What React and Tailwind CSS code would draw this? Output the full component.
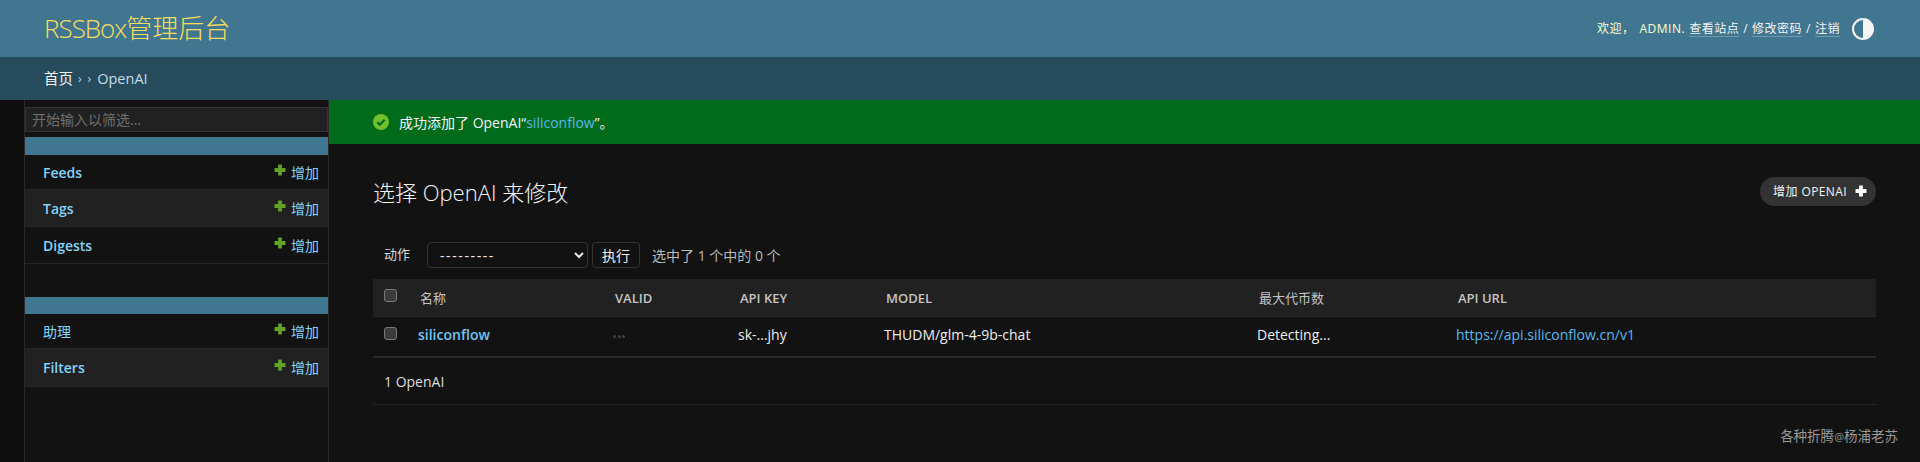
const FONT = "font-['Open_Sans','Noto_Sans_CJK_SC',sans-serif]";

function PlusIcon({ className = "text-[#5fa225]", size = 12 }) {
  return (
    <svg width={size} height={size} viewBox="0 0 12 12" className={className}>
      <path fill="currentColor" d="M4.6 0.5h2.8a.5.5 0 0 1 .5.5v3.1H11a.5.5 0 0 1 .5.5v2.8a.5.5 0 0 1-.5.5H7.900v3.100a.5.5 0 0 1-.5.5H4.600a.5.5 0 0 1-.5-.5V7.900H1a.5.5 0 0 1-.5-.5V4.600a.5.5 0 0 1 .5-.5h3.100V1a.5.5 0 0 1 .5-.5z" />
    </svg>
  );
}

function SideRow({ label, bold = true, alt, className }) {
  return (
    <div
      className={`flex items-center justify-between pl-[18px] pr-[9px] border-b border-[#262626] ${
        alt ? "bg-[#212121]" : ""
      } ${className}`}
    >
      <span className={`text-[14px] text-[#81d4fa] ${bold ? "font-semibold" : ""}`}>{label}</span>
      <span className="flex items-center gap-[5px] text-[14px] text-[#81d4fa]">
        <PlusIcon className="text-[#5fa225] -mt-[5px]" />
        增加
      </span>
    </div>
  );
}

function Checkbox() {
  return (
    <span className="block w-[13px] h-[13px] rounded-[3px] border border-[#7a7a7a] bg-[#3b3b3b]" />
  );
}

export default function App() {
  const cols = ["w-[45px]", "w-[195px]", "w-[125px]", "w-[146px]", "w-[373px]", "w-[199px]", ""];
  const heads = [
    { label: "名称", cjk: true },
    { label: "VALID" },
    { label: "API KEY" },
    { label: "MODEL" },
    { label: "最大代币数", cjk: true },
    { label: "API URL" },
  ];

  return (
    <div className={`h-[462px] overflow-hidden bg-[#121212] text-[#eeeeee] ${FONT}`}>
      <header className="h-[57px] bg-[#417690] flex items-center justify-between pl-[44px] pr-[46px]">
        <h1 className="text-[26px] font-light text-[#f5dd5d]">
          <span className="tracking-[-1px]">RSSBox</span>管理后台
        </h1>
        <div className="flex items-center gap-[12px] text-[12px] tracking-[0.5px] text-[#ffffcc]">
          <div className="flex items-center">
            <span className="mr-[1px]">欢迎，</span>
            <span className="mr-[4px] ml-[4px]">ADMIN.</span>
            <a className="text-[#f5f5f5] border-b border-white/25 leading-[15px]">查看站点</a>
            <span className="text-[#f5f5f5] mx-[4px]">/</span>
            <a className="text-[#f5f5f5] border-b border-white/25 leading-[15px]">修改密码</a>
            <span className="text-[#f5f5f5] mx-[4px]">/</span>
            <a className="text-[#f5f5f5] border-b border-white/25 leading-[15px]">注销</a>
          </div>
          <svg width="22" height="22" viewBox="0 0 22 22">
            <circle cx="11" cy="11" r="10" fill="none" stroke="#f5f5f5" strokeWidth="2" />
            <path d="M11 1a10 10 0 0 1 0 20z" fill="#f5f5f5" />
          </svg>
        </div>
      </header>

      <div className="h-[43px] bg-[#264b5d] flex items-center pl-[44px] text-[14.500px] text-[#c4dce8]">
        <span className="text-[#f5f5f5]">首页</span>
        <span className="ml-[5px] text-[12px]">›</span>
        <span className="ml-[6px] text-[12px]">›</span>
        <span className="ml-[6px]">OpenAI</span>
      </div>

      <div className="flex h-[362px]">
        <div className="w-[25px] shrink-0 bg-[#0e0e0e] border-r border-[#2a2a2a]" />

        <aside className="w-[304px] shrink-0 border-r border-[#2a2a2a]">
          <div className="pt-[7px] pb-[5px]">
            <input
              placeholder="开始输入以筛选..."
              className="block w-full h-[25px] px-[6px] text-[14px] bg-[#212121] border border-[#333333] outline-none placeholder:text-[#6f6f6f]"
            />
          </div>
          <div className="h-[18px] bg-[#417690]" />
          <SideRow label="Feeds" className="h-[35px]" />
          <SideRow label="Tags" alt className="h-[37px]" />
          <SideRow label="Digests" className="h-[37px] border-[#2a2a2a]" />
          <div className="h-[33px]" />
          <div className="h-[17px] bg-[#417690]" />
          <SideRow label="助理" bold={false} className="h-[35px]" />
          <SideRow label="Filters" alt className="h-[38px]" />
        </aside>

        <main className="flex-1 min-w-0">
          <div className="h-[44px] bg-[#006b1b] flex items-center pl-[45px] text-[14px] text-[#f5f5f5]">
            <svg width="16" height="16" viewBox="0 0 16 16" className="mr-[10px] -ml-[1px] shrink-0">
              <circle cx="8" cy="8" r="8" fill="#70bf2b" />
              <path d="M4.300 8.300l2.500 2.500 4.900-5" fill="none" stroke="#006b1b" strokeWidth="2.200" />
            </svg>
            <span>
              成功添加了 OpenAI“<a className="text-[#5cb8ee]">siliconflow</a>”。
            </span>
          </div>

          <div className="pl-[44px] pr-[44px]">
            <div className="flex items-start justify-between h-[34px] mt-[33px]">
              <h2 className="text-[22px] font-light leading-[31px] text-[#f5f5f5]">选择 OpenAI 来修改</h2>
              <a className="flex items-center h-[29px] rounded-full bg-[#333333] pl-[13px] pr-[9px] text-[12px] tracking-[0.4px] text-[#f5f5f5] gap-[8px]">
                增加 OPENAI
                <PlusIcon className="text-white -mt-[2px]" />
              </a>
            </div>

            <div className="flex items-center h-[26px] mt-[31px] text-[13px]">
              <span className="ml-[11px] w-[43px] text-[#dddddd]">动作</span>
              <select className="w-[161px] h-[26px] rounded-[4px] border border-[#333333] bg-[#121212] pl-[8px] text-[14px] tracking-[1.6px] text-[#eeeeee] [color-scheme:dark]">
                <option>---------</option>
              </select>
              <button className="ml-[4px] w-[48px] h-[26px] rounded-[4px] border border-[#333333] text-[14px] text-[#eeeeee]">
                执行
              </button>
              <span className="ml-[12px] text-[14px] text-[#bbbbbb]">选中了 1 个中的 0 个</span>
            </div>

            <table className="w-full table-fixed mt-[11px] text-[14px]">
              <colgroup>
                {cols.map((c, i) => (
                  <col key={i} className={c} />
                ))}
              </colgroup>
              <thead>
                <tr className="h-[37px] bg-[#212121] border-b border-[#262626]">
                  <th className="pl-[11px] align-middle">
                    <div className="-mt-[4px]"><Checkbox /></div>
                  </th>
                  {heads.map((h) => (
                    <th
                      key={h.label}
                      className={`pl-[2px] pt-[2px] text-left text-[13px] text-[#c4c4c4] ${
                        h.cjk ? "font-normal" : "font-semibold"
                      }`}
                    >
                      {h.label}
                    </th>
                  ))}
                </tr>
              </thead>
              <tbody>
                <tr className="h-[41px] border-b-2 border-[#2a2a2a]">
                  <td className="pl-[11px]">
                    <div className="-mt-[5px]"><Checkbox /></div>
                  </td>
                  <td className="pb-[4px] font-semibold text-[#70c5f5]">siliconflow</td>
                  <td>
                    <div className="flex gap-[1.500px]">
                      <span className="w-[3px] h-[3px] rounded-full bg-[#444444]" />
                      <span className="w-[3px] h-[3px] rounded-full bg-[#444444]" />
                      <span className="w-[3px] h-[3px] rounded-full bg-[#444444]" />
                    </div>
                  </td>
                  <td className="pb-[4px]">sk-...jhy</td>
                  <td className="pb-[4px]">THUDM/glm-4-9b-chat</td>
                  <td className="pb-[4px]">Detecting...</td>
                  <td className="pb-[4px] text-[#5cb8ee]">https://api.siliconflow.cn/v1</td>
                </tr>
              </tbody>
            </table>

            <div className="h-[47px] flex items-center pl-[11px] text-[14px] text-[#dddddd] border-b border-[#262626]">
              1 OpenAI
            </div>

            <div className="flex justify-end pt-[21px] -mr-[22px] text-[13.500px] text-[#999999]">
              <span>
                各种折腾<span className="text-[11px]">@</span>杨浦老苏
              </span>
            </div>
          </div>
        </main>
      </div>
    </div>
  );
}
